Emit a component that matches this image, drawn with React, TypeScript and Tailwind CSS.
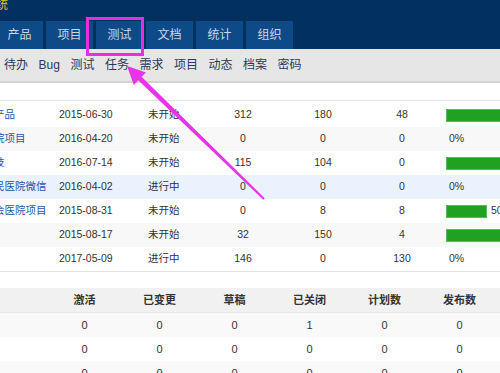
import React from "react";

type Row = { name: string; date: string; status: string; a: number; b: number; c: number; bg: string };

const rows: Row[] = [
  { name: "测试产品", date: "2015-06-30", status: "未开始", a: 312, b: 180, c: 48, bg: "bg-white" },
  { name: "某医院项目", date: "2016-04-20", status: "未开始", a: 0, b: 0, c: 0, bg: "bg-[#f8f8f8]" },
  { name: "某科技", date: "2016-07-14", status: "未开始", a: 115, b: 104, c: 0, bg: "bg-white" },
  { name: "市人民医院微信", date: "2016-04-02", status: "进行中", a: 0, b: 0, c: 0, bg: "bg-[#eaf2fd]" },
  { name: "总工会医院项目", date: "2015-08-31", status: "未开始", a: 0, b: 8, c: 8, bg: "bg-white" },
  { name: "演示", date: "2015-08-17", status: "未开始", a: 32, b: 150, c: 4, bg: "bg-[#f8f8f8]" },
  { name: "测试", date: "2017-05-09", status: "进行中", a: 146, b: 0, c: 130, bg: "bg-white" },
];

const tabs = ["产品", "项目", "测试", "文档", "统计", "组织"];
const subnav = ["待办", "Bug", "测试", "任务", "需求", "项目", "动态", "档案", "密码"];

const heads = ["激活", "已变更", "草稿", "已关闭", "计划数", "发布数"];
const rows2: { v: number[]; bg: string }[] = [
  { v: [0, 0, 0, 1, 0, 0], bg: "bg-[#f9f9f9]" },
  { v: [0, 0, 0, 0, 0, 0], bg: "bg-white" },
  { v: [0, 0, 0, 0, 0, 0], bg: "bg-[#f9f9f9]" },
];

export default function App() {
  return (
    <div className="relative w-[500px] h-[373px] overflow-hidden bg-white font-['Liberation_Sans','Noto_Sans_CJK_SC',sans-serif] text-[#333]">
      {/* top bar */}
      <header className="bg-[#03315f]">
        <div className="h-[21px] flex items-start whitespace-nowrap">
          <span className="-ml-[40px] -mt-[2px] text-[12px] leading-[14px] text-[#e6c619]">管理系统</span>
        </div>
        <nav className="flex gap-[3px] h-[28px] -ml-[4px]">
          {tabs.map((t) => (
            <div
              key={t}
              className="w-[47px] shrink-0 h-full bg-[#0e4a87] text-[#c9d7e8] text-[12px] flex items-center justify-center"
            >
              {t}
            </div>
          ))}
        </nav>
      </header>

      {/* sub nav */}
      <div className="h-[34px] bg-[#e6e6e6] border-b-2 border-[#d3d3d3] flex items-center gap-[10.5px] pl-[4px] text-[12px] text-[#2a3a56]">
        {subnav.map((s, i) => (
          <span key={i}>{s}</span>
        ))}
      </div>

      {/* table 1 */}
      <div className="pt-[17px]">
        <div className="border-t border-b border-[#e2e2e2] pt-[2px] text-[10.5px]">
          {rows.map((r, i) => {
            const pct = r.b + r.c > 0 ? Math.round((r.b / (r.b + r.c)) * 100) : 0;
            return (
              <div key={i} className={`flex items-center h-[24px] -ml-[27px] whitespace-nowrap ${r.bg}`}>
                <div className="w-[86px] shrink-0 overflow-hidden text-[#2456a6]">{r.name}</div>
                <div className="w-[89px] shrink-0">{r.date}</div>
                <div className="w-[55px] shrink-0">{r.status}</div>
                <div className="w-[80px] shrink-0 text-center">{r.a}</div>
                <div className="w-[80px] shrink-0 text-center">{r.b}</div>
                <div className="w-[78px] shrink-0 text-center">{r.c}</div>
                <div className="w-[130px] shrink-0 pl-[5px] flex items-center">
                  {pct > 0 ? (
                    <>
                      <div
                        className="h-[13px] bg-[#22a022] border border-[#5cba5c] shrink-0"
                        style={{ width: `${(82 * pct) / 100}px` }}
                      />
                      <span className="ml-[4px]">{pct}%</span>
                    </>
                  ) : (
                    <span className="ml-[3px]">0%</span>
                  )}
                </div>
              </div>
            );
          })}
        </div>
      </div>

      {/* table 2 */}
      <div className="mt-[16px] text-[11px]">
        <div className="flex h-[25px] items-center bg-[#f1f1f1] border-b border-[#e6e6e6] font-bold">
          <div className="w-[47px] shrink-0" />
          {heads.map((h) => (
            <div key={h} className="w-[75px] shrink-0 text-center">
              {h}
            </div>
          ))}
        </div>
        {rows2.map((r, i) => (
          <div key={i} className={`flex h-[24px] items-center ${r.bg}`}>
            <div className="w-[47px] shrink-0" />
            {r.v.map((v, j) => (
              <div key={j} className="w-[75px] shrink-0 text-center">
                {v}
              </div>
            ))}
          </div>
        ))}
      </div>

      {/* annotation: highlight box */}
      <div className="absolute left-[86px] top-[17px] w-[58px] h-[39px] border-[3px] border-[#e62ee6] pointer-events-none" />

      {/* annotation: arrow */}
      <svg className="absolute left-0 top-0 pointer-events-none" width="500" height="373" viewBox="0 0 500 373">
        <polygon
          points="127,66 146,72.5 141.6,76.7 264.7,198.3 263.3,199.7 138.2,80.3 133.8,85"
          fill="#e833e8"
        />
      </svg>
    </div>
  );
}
